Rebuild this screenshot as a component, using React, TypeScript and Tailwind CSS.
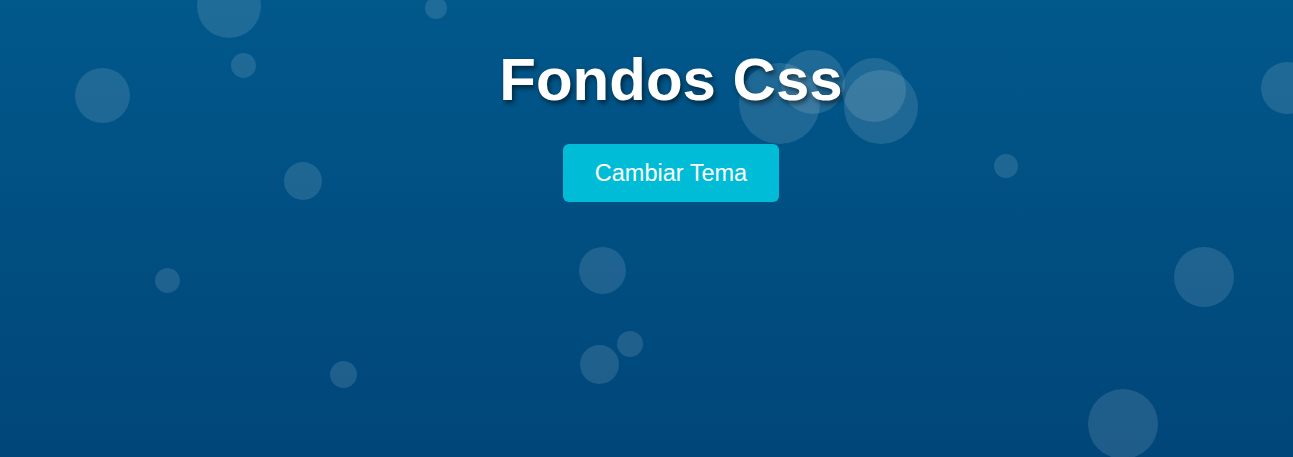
import React from "react";

const bubbles: [number, number, number][] = [
  [229, 6, 32],
  [436, 8, 11],
  [243.5, 65.5, 12.5],
  [102.5, 95.5, 27.5],
  [303, 181, 19],
  [167.5, 280.5, 12.5],
  [343.5, 374, 13.5],
  [602, 270, 23.5],
  [630, 344, 13],
  [599.5, 364.5, 19.5],
  [1204, 277, 30],
  [1123, 424, 35],
  [779.5, 103.5, 40.5],
  [812.5, 82, 32],
  [873.5, 89.5, 32],
  [881, 107, 37],
  [1006, 166, 12],
  [1287, 88, 26],
];

export default function App() {
  return (
    <div className="relative w-full h-[457px] overflow-hidden bg-[linear-gradient(to_bottom,#01588b,#014679)] font-['Liberation_Sans',Arial,sans-serif]">
      {bubbles.map(([x, y, r], i) => (
        <div
          key={i}
          className="absolute rounded-full bg-white/[0.12]"
          style={{ left: x - r, top: y - r, width: r * 2, height: r * 2 }}
        />
      ))}
      <div className="relative flex flex-col items-center pt-[50px] pl-[49px]">
        <h1 className="text-[60px] leading-[60px] font-bold text-white [text-shadow:2px_3px_5px_rgba(0,0,0,0.55)]">
          Fondos Css
        </h1>
        <button className="mt-[34px] h-[58px] px-[32px] rounded-[6px] bg-[#00bcd6] text-white text-[23.5px] leading-[24px]">
          Cambiar Tema
        </button>
      </div>
    </div>
  );
}
